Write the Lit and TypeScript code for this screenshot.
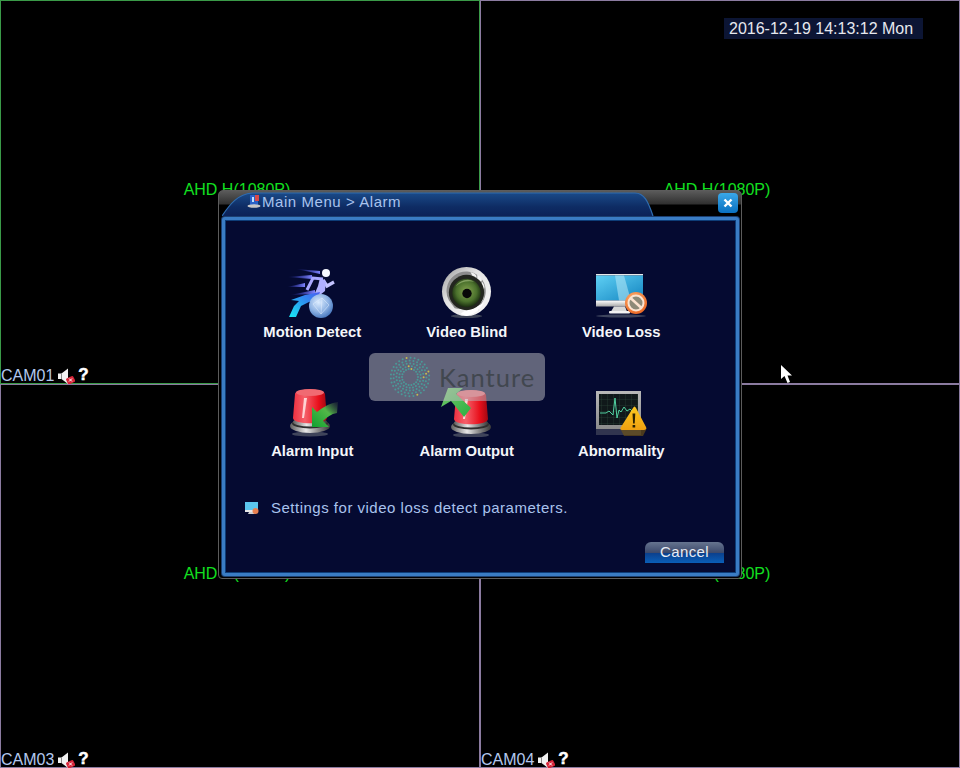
import { LitElement, html, css, svg } from "lit";
import { customElement } from "lit/decorators.js";

const speaker = html`<svg class="spk" width="18" height="17" viewBox="0 0 18 17">
  <path d="M1 5.500h3.500L11 .5v15.500L4.500 11H1z" fill="#f2f2f2"/>
  <path d="M4.500 5.500v5.500" stroke="#8c8c8c" stroke-width="1"/>
  <rect x="9.500" y="9" width="8" height="6.500" rx="1.500" fill="#d8263a" transform="rotate(-25 13.500 12)"/>
  <path d="M12 10.500l3 3M15 10.500l-3 3" stroke="#fff" stroke-width="1"/>
</svg>`;

const motion = svg`<svg width="50" height="50" viewBox="0 0 50 50">
  <defs>
    <radialGradient id="gl" cx=".4" cy=".35" r=".75"><stop offset="0" stop-color="#dcecff"/><stop offset=".55" stop-color="#8bb0e2"/><stop offset="1" stop-color="#3568b4"/></radialGradient>
    <linearGradient id="st" x1="0" x2="1"><stop offset="0" stop-color="#3a42e0" stop-opacity="0"/><stop offset="1" stop-color="#7f84ff"/></linearGradient>
    <linearGradient id="cy" x1="0" y1="1" x2="1" y2="0"><stop offset="0" stop-color="#18eaf4"/><stop offset=".6" stop-color="#2f8cf0"/><stop offset="1" stop-color="#4a5cf0"/></linearGradient>
  </defs>
  <path d="M9 1 L33 3 L33 6 Z" fill="url(#st)"/>
  <path d="M0 9 L25 7 L25 11 Z" fill="url(#st)"/>
  <path d="M0 19 L18 15 L18 19 Z" fill="url(#st)"/>
  <path d="M3 27 L28 22 L28 26 Z" fill="url(#st)"/>
  <circle cx="39" cy="5" r="4" fill="#f6f8ff"/>
  <path d="M20 22 L26 10 L36 11" fill="none" stroke="#a9a8ff" stroke-width="3"/>
  <path d="M36 12 L40 18 L47 14" fill="none" stroke="#c4c4ff" stroke-width="3.200"/>
  <path d="M33 10 L39 13 L38 23 L33 27 L28 25 L31 18 Z" fill="#b0b0ff"/>
  <path d="M4 32 L18 27 L33 24 L30 32 L22 34 L14 38 L9 49 L2 49 L7 38 L12 33 Z" fill="url(#cy)"/>
  <circle cx="34" cy="38" r="12" fill="url(#gl)"/>
  <path d="M26 36 L35 30 L42 37 L34 46 L26 36 M35 30 L34 46" stroke="#e8f2ff" stroke-width=".6" fill="none" opacity=".8"/>
</svg>`;

const eye = svg`<svg width="51" height="51" viewBox="0 0 52 52">
  <defs>
    <linearGradient id="sh" x1="0" y1="0" x2="1" y2="1"><stop offset="0" stop-color="#9a9a9a"/><stop offset=".4" stop-color="#e4e4e4"/><stop offset="1" stop-color="#f8f8f8"/></linearGradient>
    <radialGradient id="iris" cx=".5" cy=".45" r=".55"><stop offset="0" stop-color="#86a650"/><stop offset=".65" stop-color="#4a702c"/><stop offset="1" stop-color="#1a2c10"/></radialGradient>
  </defs>
  <ellipse cx="26" cy="50" rx="16" ry="2" fill="#565b66" opacity=".7"/>
  <circle cx="26" cy="25" r="25" fill="url(#sh)"/>
  <path d="M8 34 A20 20 0 1 1 42 36 L38 44 C30 40 22 44 14 42 Z" fill="#8c8c8c"/>
  <path d="M30 5 C34 6 37 8 36 11 L32 9 Z M37 8 C41 10 43 13 41 15 L37 12 Z M42 15 C45 19 45 22 43 23 L40 19 Z M43 27 C44 31 43 34 41 36 L39 31 Z" fill="#f2f2f2"/>
  <path d="M20 48 C26 42 36 42 44 36 A25 25 0 0 1 26 50 Z" fill="#fff"/>
  <circle cx="26" cy="26" r="18" fill="#23261f"/>
  <circle cx="26" cy="26.500" r="14.500" fill="url(#iris)"/>
  <circle cx="26.500" cy="27" r="4.800" fill="#080808"/>
  <path d="M15 20 A14 14 0 0 1 34 15 A18 12 0 0 0 15 20Z" fill="#b8d090" opacity=".55"/>
</svg>`;

const monitor = svg`<svg width="52" height="46" viewBox="0 0 52 46">
  <defs>
    <linearGradient id="scr" x1="0" y1="0" x2="1" y2="1"><stop offset="0" stop-color="#5fd0f4"/><stop offset="1" stop-color="#1384c0"/></linearGradient>
    <linearGradient id="chin" x1="0" y1="0" x2="0" y2="1"><stop offset="0" stop-color="#fff"/><stop offset="1" stop-color="#a8a8a8"/></linearGradient>
    <radialGradient id="org" cx=".4" cy=".3" r=".8"><stop offset="0" stop-color="#ffb070"/><stop offset="1" stop-color="#e8601c"/></radialGradient>
  </defs>
  <path d="M1 2h47v1.500H1z" fill="#e8e8e8"/>
  <rect x="1" y="3.500" width="47" height="25" fill="url(#scr)"/>
  <path d="M20 3.500h9l7 25H24z" fill="#b8eaf8" opacity=".55"/>
  <rect x="1" y="28.500" width="47" height="6" fill="url(#chin)"/>
  <path d="M19 34.500h11l2 5H16z" fill="#d8d8d8"/>
  <rect x="14" y="39" width="21" height="2.500" rx="1" fill="#f2f2f2"/>
  <ellipse cx="26" cy="44" rx="25" ry="1.500" fill="#555c70" opacity=".7"/>
  <circle cx="41" cy="31" r="11" fill="url(#org)"/>
  <circle cx="41" cy="31" r="7.500" fill="#8d8a78"/>
  <circle cx="41" cy="31" r="7.500" fill="none" stroke="#fbe3d0" stroke-width="2"/>
  <path d="M35.500 26 L46.500 36" stroke="#fbe3d0" stroke-width="2.500"/>
</svg>`;

const dome = (id: string) => svg`
  <defs>
    <linearGradient id="${id}-red" x1="0" x2="1"><stop offset="0" stop-color="#ee3040"/><stop offset=".35" stop-color="#f5606a"/><stop offset=".75" stop-color="#e8101c"/><stop offset="1" stop-color="#a00812"/></linearGradient>
    <linearGradient id="${id}-met" x1="0" x2="1"><stop offset="0" stop-color="#5e5e5e"/><stop offset=".4" stop-color="#e8e8e8"/><stop offset=".7" stop-color="#8a8a8a"/><stop offset="1" stop-color="#3a3a3a"/></linearGradient>
  </defs>
  <ellipse cx="20" cy="47" rx="18" ry="2.500" fill="#585c6c" opacity=".7"/>
  <ellipse cx="20" cy="39" rx="20" ry="7" fill="url(#${id}-met)"/>
  <ellipse cx="20" cy="36.500" rx="18" ry="5" fill="#2f2f2f"/>
  <ellipse cx="20" cy="35" rx="17" ry="4.500" fill="url(#${id}-met)"/>
  <path d="M5 7 C5 1 35 1 35 7 L37 31 C37 38 3 38 3 31 Z" fill="url(#${id}-red)"/>
  <ellipse cx="20" cy="5.500" rx="14" ry="3.500" fill="#f06a72"/>
  <path d="M14 11 L17 11 L14 31 L12 31Z" fill="#ffe0e0" opacity=".9"/>
`;

const alarmIn = svg`<svg width="52" height="50" viewBox="0 0 52 50">
  <defs><linearGradient id="ga" x1="1" y1="0" x2="0" y2="1"><stop offset="0" stop-color="#4a5c40" stop-opacity=".2"/><stop offset=".4" stop-color="#52b848"/><stop offset="1" stop-color="#10a030"/></linearGradient></defs>
  <g transform="translate(4 0)">${dome("din")}</g>
  <path d="M26 20 L31 25 C37 20 44 16 52 15 L51 26 C45 27 41 30 37 34 L43 40 L26 40 Z" fill="url(#ga)"/>
</svg>`;

const alarmOut = svg`<svg width="52" height="50" viewBox="0 0 52 50">
  <defs><linearGradient id="gb" x1="0" y1="0" x2="1" y2="1"><stop offset="0" stop-color="#78c86c"/><stop offset="1" stop-color="#28b040"/></linearGradient></defs>
  <g transform="translate(10 1)">${dome("dout")}</g>
  <path d="M0 20 L7 1 L22 1 L15 7 L30 21 L23 30 L10 14 L0 20Z" fill="url(#gb)"/>
</svg>`;

const abnormal = svg`<svg width="52" height="50" viewBox="0 0 52 50">
  <defs>
    <linearGradient id="fr" x1="0" y1="0" x2="0" y2="1"><stop offset="0" stop-color="#b8b8b8"/><stop offset="1" stop-color="#8c8c8c"/></linearGradient>
    <linearGradient id="tri" x1="0" y1="0" x2="0" y2="1"><stop offset="0" stop-color="#fcc820"/><stop offset="1" stop-color="#f0a010"/></linearGradient>
    <pattern id="gr" width="6" height="6" patternUnits="userSpaceOnUse"><path d="M6 0H0V6" fill="none" stroke="#2e4a3c" stroke-width=".6"/></pattern>
  </defs>
  <rect x="1" y="4" width="45" height="38" fill="url(#fr)"/>
  <rect x="4" y="7" width="39" height="31" fill="#10181a"/>
  <rect x="4" y="7" width="39" height="31" fill="url(#gr)"/>
  <path d="M5 26 L11 26 L14 24 L17 27 L18 28 L20 11 L22 31 L24 23 L26 25 L29 20 L32 24 L35 22 L40 27" fill="none" stroke="#50d0a0" stroke-width="1"/>
  <path d="M1 42h45v6H1z" fill="#555a68" opacity=".55"/>
  <path d="M38 21 C39 19 40 19 41 21 L51 40 C52 42 51 43 49 43 L27 43 C25 43 25 42 26 40 Z" fill="url(#tri)"/>
  <path d="M37.500 26.500 h2.800 l-.6 10 h-1.600z M37.600 38h2.600v2.500h-2.600z" fill="#2b2100"/>
  <path d="M26 43 h25 l-3 6 h-19z" fill="#7a5a10" opacity=".6"/>
</svg>`;

const miniIcon = svg`<svg width="14" height="13" viewBox="0 0 14 13">
  <rect x="0" y="0" width="13" height="8" fill="#5cc6ee"/>
  <rect x="0" y="8" width="13" height="2" fill="#e8e8e8"/>
  <path d="M4 10h5l1 2H3z" fill="#cfcfcf"/>
  <circle cx="10.500" cy="9" r="3" fill="#e88050"/>
</svg>`;

const ringDots = () => {
  const out = [];
  for (let r = 0; r < 5; r++) {
    const n = 18 + r * 3;
    for (let i = 0; i < n; i++) {
      const a = (i / n) * Math.PI * 2 + r * 0.4;
      const rad = 8 + r * 2.800;
      const warm = i % 7 === 0 && a > 4.5;
      out.push(svg`<circle cx=${24 + rad * Math.cos(a)} cy=${24 + rad * Math.sin(a)} r="1" fill=${warm ? "#c4bc50" : "#4a9a98"}/>`);
    }
  }
  return out;
};

const items = [
  { label: "Motion Detect", icon: motion },
  { label: "Video Blind", icon: eye },
  { label: "Video Loss", icon: monitor },
  { label: "Alarm Input", icon: alarmIn },
  { label: "Alarm Output", icon: alarmOut },
  { label: "Abnormality", icon: abnormal },
];

const cams = ["CAM01", "", "CAM03", "CAM04"];

@customElement("app-root")
export class AppRoot extends LitElement {
  static styles = css`
    :host { display: block; width: 960px; height: 768px; position: relative; background: #000; overflow: hidden; font-family: "Liberation Sans", Arial, sans-serif; }
    .wall { display: grid; grid-template-columns: 480px 480px; grid-template-rows: 384px 384px; }
    .cell { position: relative; box-sizing: border-box; border: 1px solid #8b7ba0; display: flex; align-items: center; justify-content: center; }
    .cell.active { border-color: #3a9a48; }
    .mode { color: #12e020; font-size: 16px; margin: -5px 6px 0 0; }
    .tag { position: absolute; left: 0; bottom: 0; display: flex; align-items: center; height: 14px; gap: 3px; color: #b3c8ee; font-size: 16px; line-height: 14px; }
    .q { color: #fff; font-weight: 700; font-size: 17px; line-height: 14px; margin-bottom: 3px; -webkit-text-stroke: .5px #fff; }
    .clock { position: absolute; left: 724px; top: 18px; width: 199px; height: 21px; box-sizing: border-box; padding-left: 5px; background: #0c1534; color: #e6e8ee; font-size: 16px; line-height: 21px; }
    .dialog { position: absolute; left: 218px; top: 190px; width: 524px; height: 389px; box-sizing: border-box; border: 1px solid #5c5c5c; border-radius: 5px 5px 4px 4px; background: linear-gradient(#5a5a5a 0, #303030 13px, #000 14px); display: flex; flex-direction: column; padding: 0 2px 2px 3px; }
    .head { position: relative; height: 26px; flex: none; box-sizing: border-box; display: flex; align-items: center; padding: 0 0 6px 25px; }
    .tab { position: absolute; left: 0; top: 0; }
    .head-icon, .title { position: relative; }
    .title { color: #a9c3ee; font-size: 15px; letter-spacing: .56px; margin-left: 1px; }
    .close { position: absolute; right: 1px; top: 2px; width: 20px; height: 20px; box-sizing: border-box; border-radius: 4px; background: linear-gradient(#3aa8e8, #0a70c0); display: flex; align-items: center; justify-content: center; }
    .body { flex: 1; box-sizing: border-box; background: #050a31; border: 3px solid #3a7cc4; border-radius: 3px; box-shadow: inset 0 0 0 1px #0e3d78, 0 0 0 1px #1c3f70; display: flex; flex-direction: column; padding: 47px 12px 10px 10px; }
    .grid { display: grid; grid-template-columns: repeat(3, 154.500px); row-gap: 46px; }
    .item { display: flex; flex-direction: column; align-items: center; height: 73px; }
    .pic { height: 51px; flex: none; display: flex; align-items: flex-end; justify-content: center; }
    .label { margin-top: 6px; color: #f4f6fa; font-size: 14.800px; font-weight: 700; line-height: 16px; white-space: nowrap; }
    .desc { display: flex; align-items: center; gap: 12px; margin: 40px 0 0 10px; color: #a9c3ee; font-size: 15px; letter-spacing: .5px; line-height: 18px; }
    .foot { margin-top: auto; display: flex; justify-content: flex-end; }
    .cancel { width: 79px; height: 21px; border: 0; padding: 0 0 2px; border-radius: 6px 6px 0 0; color: #e8ecf4; font: 15px "Liberation Sans", Arial, sans-serif; letter-spacing: .4px; background: linear-gradient(#66748f 0, #3d4a6c 50%, #0b3f8c 52%, #0a5fb8 100%); }
    .mark { position: absolute; left: 369px; top: 353px; width: 176px; height: 48px; border-radius: 6px; background: rgba(190, 190, 195, .5); display: flex; align-items: center; padding-left: 17px; box-sizing: border-box; gap: 5px; }
    .mark span { color: #41474f; font: 400 25.500px "Lato", sans-serif; letter-spacing: 1px; }
    .cursor { position: absolute; left: 780px; top: 364px; }
  `;

  render() {
    return html`
      <div class="wall">
        ${cams.map((c, i) => html`
          <div class="cell ${i === 0 ? "active" : ""}">
            <div class="mode">AHD H(1080P)</div>
            ${c ? html`<div class="tag">${c}${speaker}<span class="q">?</span></div>` : ""}
          </div>`)}
      </div>
      <div class="clock">2016-12-19 14:13:12 Mon</div>

      <section class="dialog">
        <header class="head">
          <svg class="tab" width="434" height="26" viewBox="0 0 434 26">
            <defs><linearGradient id="tb" x1="0" y1="0" x2="0" y2="1"><stop offset="0" stop-color="#1a4a88"/><stop offset=".6" stop-color="#0e2c64"/><stop offset="1" stop-color="#0c2258"/></linearGradient></defs>
            <path d="M0 25 C8 13 16 3 30 2 L413 2 C422 2 426 10 431 25 Z" fill="url(#tb)"/>
            <path d="M0 25 C8 13 16 3 30 2 L413 2 C422 2 426 10 431 25" fill="none" stroke="#2f6cb0" stroke-width="1.200"/>
          </svg>
          <svg class="head-icon" width="14" height="14" viewBox="0 0 14 14">
            <path d="M3 1h8v10H3z" fill="#2a62c8"/>
            <path d="M8 1h4v6H8z" fill="#d84a4a"/>
            <ellipse cx="7" cy="12" rx="6.500" ry="1.800" fill="#c8c8c8"/>
            <path d="M5 3h2v5H5z" fill="#bfe0ff"/>
          </svg>
          <span class="title">Main Menu &gt; Alarm</span>
          <div class="close">
            <svg width="10" height="10" viewBox="0 0 10 10"><path d="M1.500 1.500l7 7M8.500 1.500l-7 7" stroke="#fff" stroke-width="2.400"/></svg>
          </div>
        </header>
        <div class="body">
          <div class="grid">
            ${items.map((it) => html`<div class="item"><div class="pic">${it.icon}</div><div class="label">${it.label}</div></div>`)}
          </div>
          <div class="desc">${miniIcon}<span>Settings for video loss detect parameters.</span></div>
          <div class="foot"><button class="cancel">Cancel</button></div>
        </div>
      </section>

      <div class="mark">
        <svg width="48" height="48" viewBox="0 0 48 48">${ringDots()}</svg>
        <span>Kanture</span>
      </div>

      <svg class="cursor" width="14" height="20" viewBox="0 0 14 20">
        <path d="M1 1 L1 15 L4.500 12 L7.500 19 L10 18 L7.500 11.500 L12 11.500 Z" fill="#fff"/>
      </svg>
    `;
  }
}
